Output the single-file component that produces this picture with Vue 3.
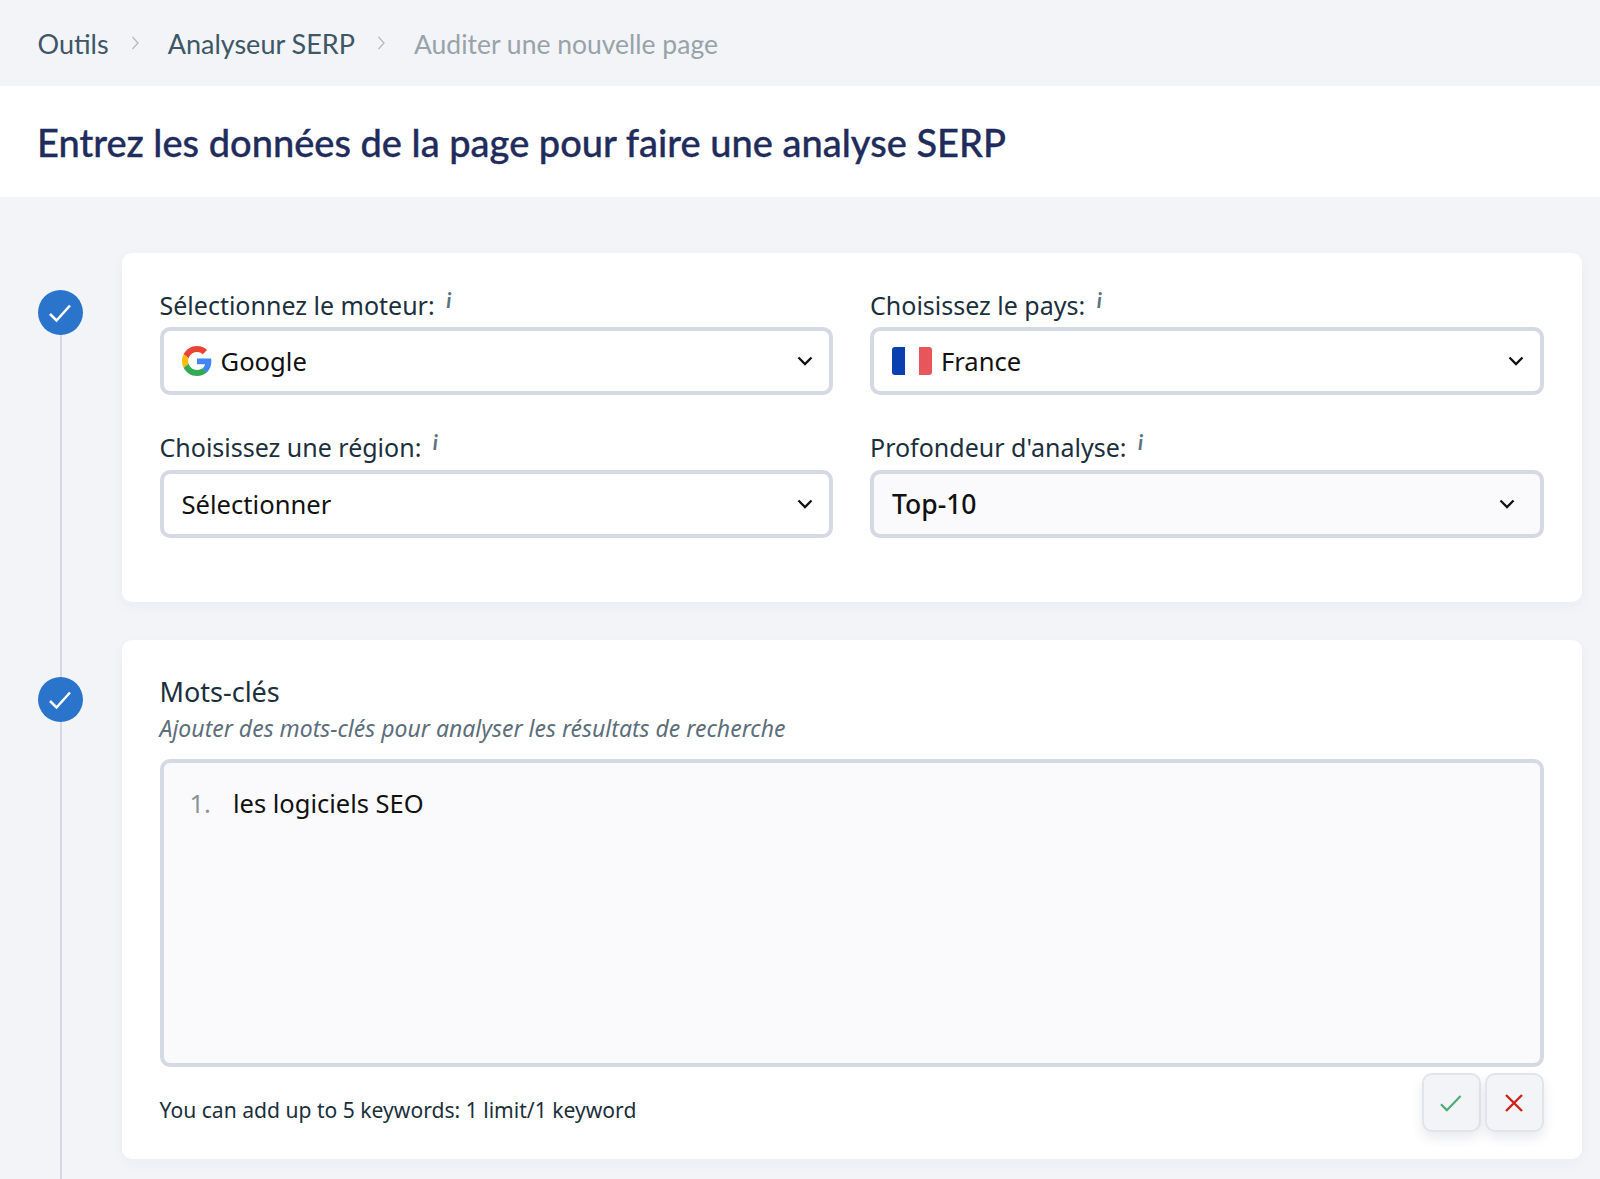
<script setup>
const selectsTop = [
  { label: 'Sélectionnez le moteur:', value: 'Google', icon: 'google' },
  { label: 'Choisissez le pays:', value: 'France', icon: 'flag' },
]
const selectsBottom = [
  { label: 'Choisissez une région:', value: 'Sélectionner', icon: '' },
  { label: "Profondeur d'analyse:", value: 'Top-10', icon: '', alt: true },
]
const fields = [...selectsTop, ...selectsBottom]
</script>

<template>
  <div class="page">
    <nav class="crumbs">
      <span>Outils</span>
      <svg class="sep" width="8" height="14" viewBox="0 0 8 14"><path d="M1.500 1 7 7l-5.500 6" fill="none" stroke="#b4bac0" stroke-width="1.300"/></svg>
      <span>Analyseur SERP</span>
      <svg class="sep" width="8" height="14" viewBox="0 0 8 14"><path d="M1.500 1 7 7l-5.500 6" fill="none" stroke="#b4bac0" stroke-width="1.300"/></svg>
      <span class="current">Auditer une nouvelle page</span>
    </nav>
    <header class="title"><h1>Entrez les données de la page pour faire une analyse SERP</h1></header>

    <main class="steps">
      <section class="step first">
        <div class="rail">
          <span class="dot"><svg width="26" height="22" viewBox="0 0 26 22"><path d="M3 12l6.500 6.500L23 3.500" fill="none" stroke="#fff" stroke-width="2.500"/></svg></span>
        </div>
        <div class="card form-card">
          <div class="grid">
            <div v-for="f in fields" :key="f.label" class="field">
              <label>{{ f.label }} <i class="info">i</i></label>
              <div class="select" :class="{ alt: f.alt }">
                <svg v-if="f.icon === 'google'" class="gicon" width="30" height="30" viewBox="0 0 48 48">
                  <path fill="#EA4335" d="M24 9.500c3.540 0 6.710 1.220 9.210 3.600l6.850-6.850C35.900 2.380 30.470 0 24 0 14.620 0 6.510 5.380 2.560 13.220l7.980 6.190C12.430 13.720 17.740 9.500 24 9.500z"/>
                  <path fill="#4285F4" d="M46.980 24.550c0-1.570-.15-3.090-.38-4.550H24v9.020h12.940c-.58 2.960-2.260 5.480-4.780 7.180l7.730 6c4.510-4.180 7.090-10.360 7.090-17.650z"/>
                  <path fill="#FBBC05" d="M10.530 28.590c-.48-1.450-.76-2.990-.76-4.590s.27-3.140.76-4.590l-7.980-6.190C.92 16.460 0 20.120 0 24c0 3.880.92 7.540 2.560 10.780l7.970-6.190z"/>
                  <path fill="#34A853" d="M24 48c6.480 0 11.930-2.130 15.890-5.810l-7.730-6c-2.150 1.450-4.920 2.300-8.160 2.300-6.260 0-11.570-4.220-13.470-9.910l-7.980 6.190C6.510 42.620 14.620 48 24 48z"/>
                </svg>
                <span v-if="f.icon === 'flag'" class="flag"><b class="blue"></b><b class="white"></b><b class="red"></b></span>
                <span class="val">{{ f.value }}</span>
                <svg class="chev" width="16" height="10" viewBox="0 0 16 10"><path d="M1.500 1.500 8 8l6.500-6.500" fill="none" stroke="#111" stroke-width="2.300"/></svg>
              </div>
            </div>
          </div>
        </div>
      </section>

      <section class="step">
        <div class="rail">
          <span class="dot"><svg width="26" height="22" viewBox="0 0 26 22"><path d="M3 12l6.500 6.500L23 3.500" fill="none" stroke="#fff" stroke-width="2.500"/></svg></span>
        </div>
        <div class="card kw-card">
          <h2>Mots-clés</h2>
          <p class="hint">Ajouter des mots-clés pour analyser les résultats de recherche</p>
          <div class="area"><span class="num">1.</span><span>les logiciels SEO</span></div>
          <div class="foot">
            <span>You can add up to 5 keywords: 1 limit/1 keyword</span>
            <div class="btns">
              <button class="btn"><svg width="24" height="24" viewBox="0 0 24 24"><path d="M2 12.500 8 18.500 22 4" transform="translate(0 1) scale(.98)" fill="none" stroke="#4dab78" stroke-width="2.200"/></svg></button>
              <button class="btn"><svg width="20" height="20" viewBox="0 0 20 20"><path d="M2 2l16 16M18 2 2 18" fill="none" stroke="#d0201c" stroke-width="2.400"/></svg></button>
            </div>
          </div>
        </div>
      </section>
    </main>
  </div>
</template>

<style>
html, body { margin: 0; background: #f2f4f8; }
</style>

<style scoped>
.page { width: 1600px; height: 1179px; overflow: hidden; background: #f2f4f8; font-family: "Noto Sans", sans-serif; color: #1c2b3a; }
.crumbs { height: 86px; box-sizing: border-box; padding: 0 37.5px; display: flex; align-items: center; font-family: Lato, sans-serif; font-size: 27px; color: #3e5666; }
.sep { margin: 0 29px 0 22px; }
.current { color: #97a3a9; font-size: 26.5px; margin-top: 2px; }
.title { height: 111px; background: #fff; display: flex; align-items: center; padding: 0 37px; }
h1 { margin: 0; font: 500 38px Lato, sans-serif; color: #1f2c5c; -webkit-text-stroke: .35px #1f2c5c; }
.steps { padding: 56px 18.5px 0 37.5px; }
.step { display: flex; gap: 39px; }
.step.first { margin-bottom: 38px; }
.rail { width: 45px; flex: none; position: relative; }
.rail::after { content: ""; position: absolute; left: 22px; top: 37px; bottom: -90px; width: 2px; background: #d5d9e4; }
.step:last-child .rail::after { bottom: -100px; }
.dot { position: absolute; top: 37px; left: 0; z-index: 1; width: 45px; height: 45px; border-radius: 50%; background: #2b74cc; display: flex; align-items: center; justify-content: center; }
.card { flex: 1; background: #fff; border-radius: 10px; padding: 0 38px; box-shadow: 0 4px 14px rgba(40, 50, 90, .04); box-sizing: border-box; }
.form-card { height: 349px; padding-top: 34px; }
.grid { display: grid; grid-template-columns: 1fr 1fr; column-gap: 37px; row-gap: 35px; }
.field label { display: block; font-size: 25px; line-height: 36px; padding-bottom: 4px; color: #1c2f3d; }
.field:nth-child(n + 3) label { line-height: 34px; padding-bottom: 6px; }
.info { font: italic 700 21px Lato, sans-serif; color: #5a7383; position: relative; top: -7px; margin-left: 5px; }
.select { height: 68px; box-sizing: border-box; border: 4px solid #d5d9e4; border-radius: 10px; background: #fff; display: flex; align-items: center; padding: 0 16px 0 18px; font-size: 25.6px; color: #111; }
.select.alt { background: #fafafc; font-weight: 500; font-size: 26.5px; }
.gicon { margin-right: 9px; }
.flag { display: flex; width: 40px; height: 28px; border-radius: 3px; overflow: hidden; margin-right: 9px; }
.flag b { flex: 1; }
.blue { background: #0a3fb0; }
.white { background: #fff; }
.red { background: #e8565c; }
.chev { margin-left: auto; }
.select.alt .chev { margin-right: 9px; }
.kw-card { height: 519px; padding-top: 32px; }
h2 { margin: 0; font-size: 27px; font-weight: 400; line-height: 40px; color: #1c2f3d; }
.hint { margin: 0 0 15px; font-style: italic; font-size: 23px; line-height: 32px; color: #5d6e7b; }
.area { height: 308px; box-sizing: border-box; border: 4px solid #d5d9e4; border-radius: 10px; background: #fafafc; padding: 22.5px 26px; display: flex; gap: 22px; font-size: 25.5px; color: #111; }
.num { color: #8b9299; }
.foot { display: flex; justify-content: space-between; align-items: flex-start; font-size: 21.1px; color: #1c2f3d; }
.foot > span { margin-top: 28px; }
.btns { display: flex; gap: 4px; margin-top: 6px; }
.btn { width: 59px; height: 59px; padding: 0; border: 2px solid #e2e4ec; border-radius: 10px; background: #f2f4f8; display: flex; align-items: center; justify-content: center; box-shadow: 0 6px 12px rgba(40, 50, 90, .1); }
</style>
